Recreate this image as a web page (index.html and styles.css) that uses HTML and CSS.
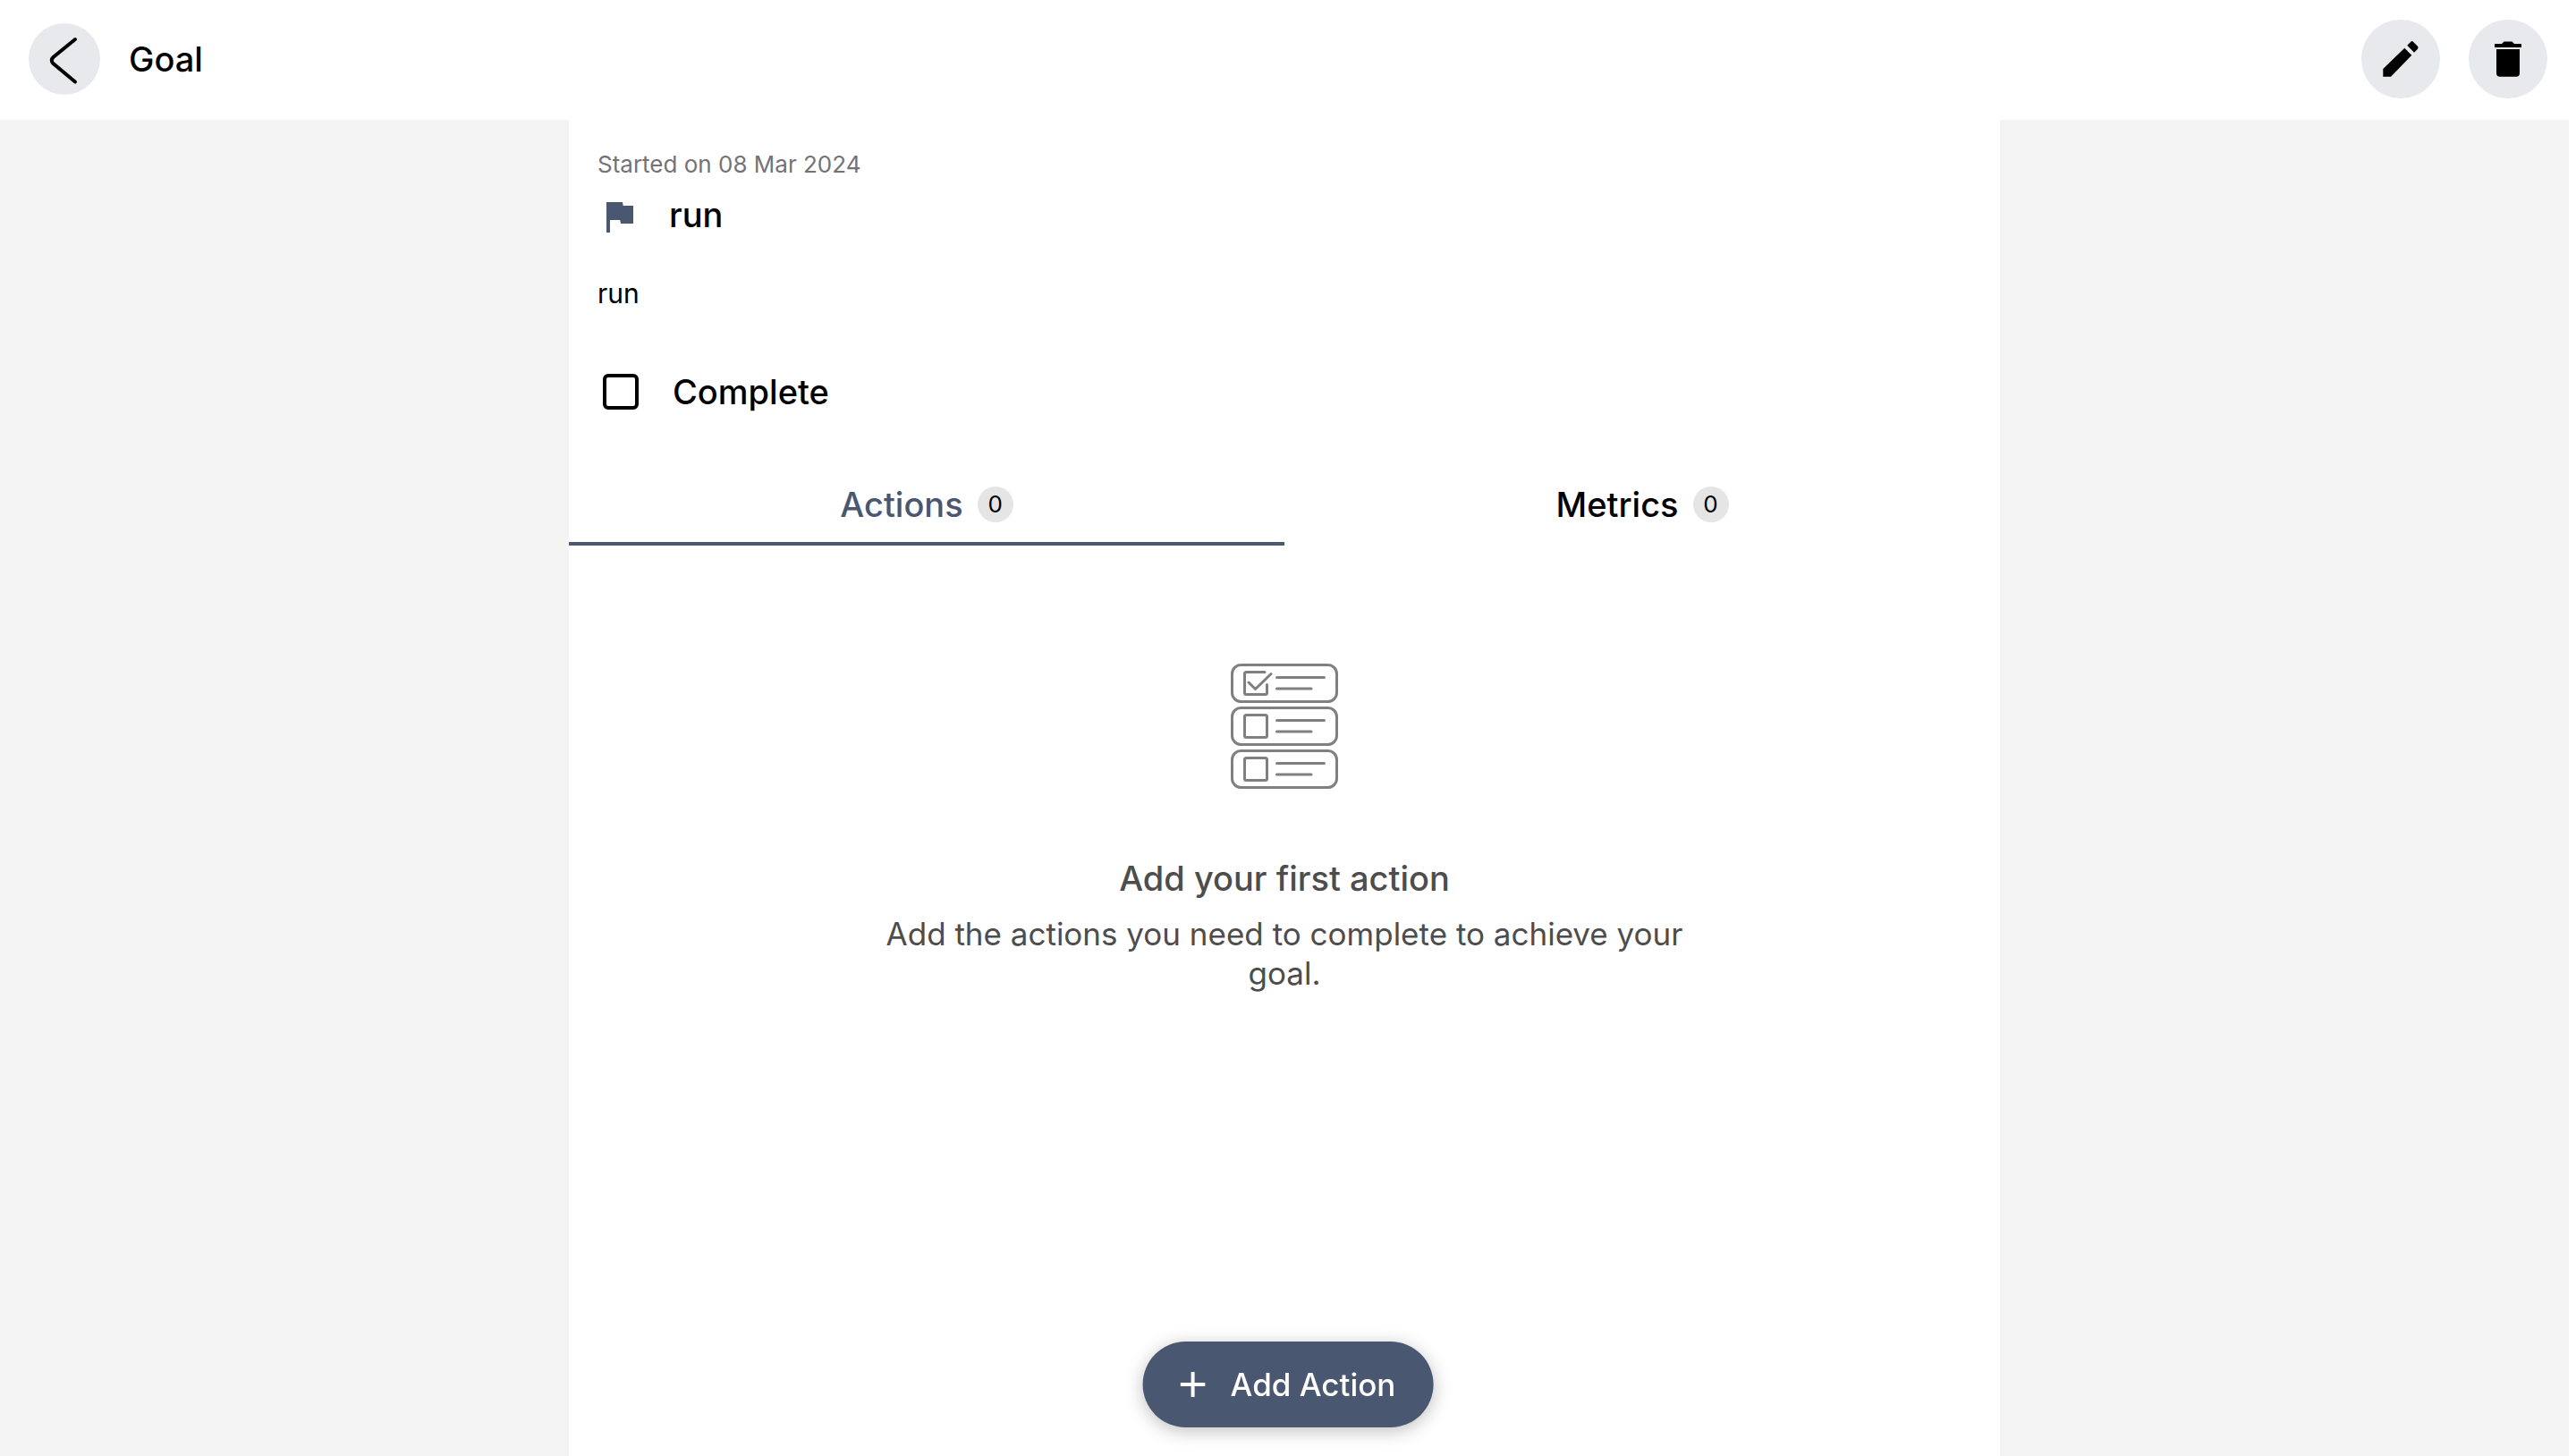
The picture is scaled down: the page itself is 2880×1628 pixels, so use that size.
FILE: index.html
```html
<!DOCTYPE html>
<html lang="en">
<head>
<meta charset="utf-8">
<meta name="viewport" content="width=device-width, initial-scale=1">
<title>Goal</title>
<link rel="stylesheet" href="styles.css">
</head>
<body>
<header class="topbar">
  <button class="round-btn round-btn--back" type="button" aria-label="Back">
    <svg viewBox="0 0 80 80" aria-hidden="true"><path d="M52 18 L27.500 38 Q24 41.500 27.500 45 L52 65.500" fill="none" stroke="currentColor" stroke-width="4" stroke-linecap="round"/></svg>
  </button>
  <h1 class="heading">Goal</h1>
  <div class="topbar-actions">
    <button class="round-btn" type="button" aria-label="Edit goal">
      <svg viewBox="0 0 88 88" aria-hidden="true"><path fill="currentColor" d="M24.300 55 48.300 31.700 56.300 39.700 33 63.700H24.300ZM51.300 28.700 55.300 24.700Q56.700 23.500 58 24.700L63 29.700Q64.200 31.200 63 32.700L59 36.700Z"/></svg>
    </button>
    <button class="round-btn" type="button" aria-label="Delete goal">
      <svg viewBox="0 0 88 88" aria-hidden="true"><path fill="currentColor" d="M29 27H37L39.500 24.500H48.500L51 27H59V31H29ZM31 33H57V60Q57 63.700 53 63.700H35Q31 63.700 31 60Z"/></svg>
    </button>
  </div>
</header>
<main class="page">
  <div class="panel">
    <section class="goal">
      <p class="started">Started on 08 Mar 2024</p>
      <div class="goal-title">
        <svg class="flag" viewBox="0 0 48 48" aria-hidden="true"><path fill="currentColor" d="M10 10H28L28.700 14H40V34H26L25.200 30H14V44H10Z"/></svg>
        <h2 class="heading">run</h2>
      </div>
      <p class="description">run</p>
      <div class="complete">
        <input class="complete-box" type="checkbox" id="complete">
        <label class="heading" for="complete">Complete</label>
      </div>
    </section>
    <div class="tabs" role="tablist">
      <button class="tab tab--active heading" type="button" role="tab" aria-selected="true">Actions <span class="badge">0</span></button>
      <button class="tab heading" type="button" role="tab" aria-selected="false">Metrics <span class="badge">0</span></button>
    </div>
    <section class="empty">
      <svg class="empty-art" viewBox="0 0 120 140" aria-hidden="true" fill="none" stroke="currentColor" stroke-width="3" stroke-linecap="round" stroke-linejoin="round">
        <rect x="1.500" y="1.500" width="117" height="41" rx="10"/>
        <rect x="1.500" y="49.500" width="117" height="41" rx="10"/>
        <rect x="1.500" y="97.500" width="117" height="41" rx="10"/>
        <path d="M38 9.500H17.500Q15.500 9.500 15.500 11.500V32.500Q15.500 34.500 17.500 34.500H38.500Q40.500 34.500 40.500 32.500V23.500M20 21 27.500 28.500 45 11.500"/>
        <rect x="15.500" y="57.500" width="25" height="25" rx="2"/>
        <rect x="15.500" y="105.500" width="25" height="25" rx="2"/>
        <path d="M51.500 15.500H104.500M51.500 28H90M51.500 63.500H104.500M51.500 76H90M51.500 111.500H104.500M51.500 124H90"/>
      </svg>
      <h3 class="heading">Add your first action</h3>
      <p class="empty-text">Add the actions you need to complete to achieve your goal.</p>
    </section>
  </div>
</main>
<button class="fab" type="button">
  <svg class="fab-icon" viewBox="0 0 28 28" aria-hidden="true"><path fill="currentColor" d="M12 0H16V12H28V16H16V28H12V16H0V12H12Z"/></svg>
  Add Action
</button>
</body>
</html>
```
FILE: styles.css
```css
* {
  box-sizing: border-box;
}

body {
  margin: 0;
  min-height: 100vh;
  display: flex;
  flex-direction: column;
  background: #fff;
  color: #000;
  font-family: Inter, "Open Sans", sans-serif;
}

h1, h2, h3, p {
  margin: 0;
}

button {
  border: 0;
  padding: 0;
  background: none;
  color: inherit;
  font: inherit;
  cursor: pointer;
}

svg {
  display: block;
}

.heading {
  font-size: 38px;
  line-height: 48px;
  font-weight: 500;
}

.topbar {
  display: flex;
  align-items: center;
  gap: 32px;
  min-height: 134px;
  padding: 0 32px 2px;
}

.topbar-actions {
  display: flex;
  gap: 32px;
  margin-left: auto;
}

.round-btn {
  width: 88px;
  height: 88px;
  border-radius: 50%;
  background: #e8e9ed;
}

.round-btn--back {
  width: 80px;
  height: 80px;
}

.page {
  flex: 1;
  display: flex;
  justify-content: center;
  margin-right: 8px;
  background: #f4f4f4;
}

.panel {
  width: 100%;
  max-width: 1600px;
  background: #fff;
}

.goal {
  padding: 34px 32px 56px;
}

.started {
  color: #737377;
  font-size: 26px;
  line-height: 32px;
}

.goal-title {
  display: flex;
  align-items: center;
  gap: 32px;
  margin-top: 16px;
}

.flag {
  width: 48px;
  height: 48px;
  color: #495771;
}

.description {
  margin-top: 44px;
  font-size: 30px;
  line-height: 40px;
}

.complete {
  display: flex;
  align-items: center;
  gap: 38px;
  margin-top: 66px;
}

.complete-box {
  appearance: none;
  width: 40px;
  height: 40px;
  margin: 0 0 0 6px;
  border: 4px solid #000;
  border-radius: 6px;
}

.complete-box:checked {
  background: #000;
}

.tabs {
  display: grid;
  grid-template-columns: 1fr 1fr;
}

.tab {
  display: flex;
  align-items: center;
  justify-content: center;
  gap: 16px;
  min-height: 92px;
  padding-top: 4px;
  border-bottom: 4px solid transparent;
}

.tab--active {
  color: #495771;
  border-color: #495771;
}

.badge {
  width: 40px;
  height: 40px;
  border-radius: 50%;
  background: #e5e5e5;
  color: #000;
  font-size: 26px;
  line-height: 40px;
  font-weight: 400;
}

.empty {
  display: flex;
  flex-direction: column;
  align-items: center;
  padding: 132px 32px 160px;
  color: #4d4d4d;
  text-align: center;
}

.empty-art {
  width: 120px;
  height: 140px;
  margin-bottom: 76px;
  color: #808080;
}

.empty-text {
  max-width: 920px;
  margin-top: 16px;
  font-size: 35px;
  line-height: 44px;
}

.fab {
  position: fixed;
  bottom: 32px;
  left: 50%;
  transform: translateX(-50%);
  display: flex;
  align-items: center;
  gap: 28px;
  height: 96px;
  padding: 0 42px;
  border-radius: 48px;
  background: #495771;
  color: #fff;
  font-size: 35px;
  font-weight: 500;
  white-space: nowrap;
  box-shadow: 0 4px 20px rgba(0, 0, 0, 0.25);
}

.fab-icon {
  width: 28px;
  height: 28px;
}
```
